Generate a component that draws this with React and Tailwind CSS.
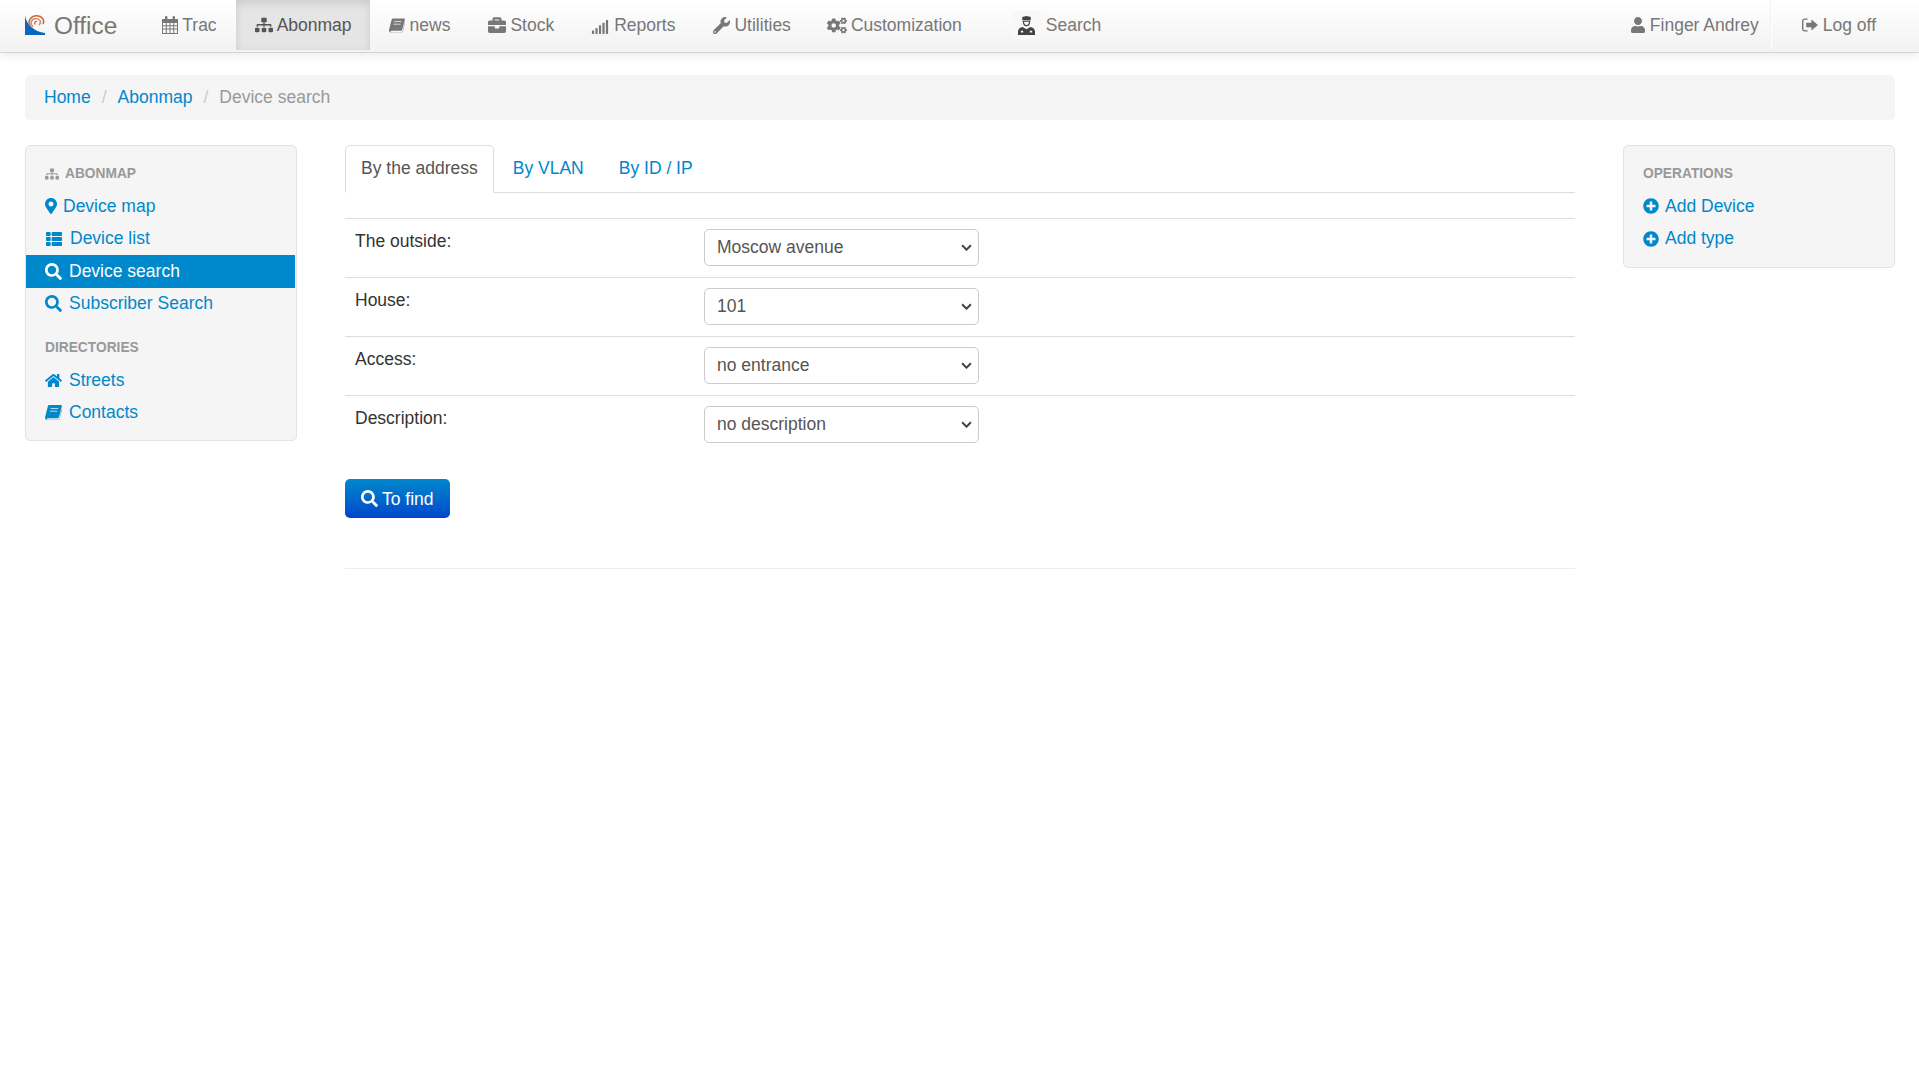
import React from 'react';
import {
  FaSitemap, FaBriefcase, FaSignal, FaWrench, FaCogs, FaUser, FaMapMarkerAlt, FaThList,
  FaSearch, FaHome, FaPlusCircle,
} from 'react-icons/fa';

const CalendarIcon = ({ className }) => (
  <svg viewBox="0 0 16 18" className={className} fill="currentColor">
    <rect x="3" y="0" width="2.4" height="4" rx="1" />
    <rect x="10.6" y="0" width="2.4" height="4" rx="1" />
    <path fillRule="evenodd" d="M0 3h16v15H0zM1 7v2.2h2.8V7zm3.8 0v2.2h2.7V7zm3.7 0v2.2h2.7V7zm3.7 0v2.2H15V7zM1 10.2v2.3h2.8v-2.3zm3.8 0v2.3h2.7v-2.3zm3.7 0v2.3h2.7v-2.3zm3.7 0v2.3H15v-2.3zM1 13.5V17h2.8v-3.5zm3.8 0V17h2.7v-3.5zm3.7 0V17h2.7v-3.5zm3.7 0V17H15v-3.5z" />
  </svg>
);

const BookIcon = ({ className }) => (
  <svg viewBox="0 0 18 16" className={className} fill="currentColor">
    <path fillRule="evenodd" d="M4.5 0H17c.8 0 1.100.6.9 1.300l-3 11.600c-.2.7-.8 1.100-1.500 1.100H2.600c-.7 0-1 .5-.8 1 .1.400.5.600 1 .600h11.400c.5 0 .9-.4 1-.8L18 3.500v1.700l-2.400 9.500c-.2.800-1 1.300-1.900 1.300H2.600C1.200 16 0 14.900 0 13.500c0-.4.100-.8.200-1.200L3 1.200C3.200.5 3.800 0 4.500 0zM6 3.300l-.2.8h8l.2-.8zM5.200 6l-.2.800h8l.2-.8z" />
  </svg>
);

const LogOffIcon = ({ className }) => (
  <svg viewBox="0 0 17 14" className={className} fill="currentColor">
    <path d="M6 0v1.500H3C2.200 1.500 1.500 2.200 1.500 3v8c0 .8.700 1.500 1.500 1.500h3V14H3c-1.700 0-3-1.300-3-3V3c0-1.700 1.300-3 3-3z" />
    <path d="M10 1.200 17 7l-7 5.800V9.300H4.500V4.700H10z" />
  </svg>
);

const PoliceIcon = ({ className }) => (
  <svg viewBox="0 0 18 20" className={className} fill="currentColor">
    <path d="M4.500 1 9 0l4.500 1v3.500h-9z" />
    <path d="M5.700 5.500h6.600c0 2.800-1.300 4.600-3.300 4.600s-3.300-1.800-3.300-4.600z" fill="none" stroke="currentColor" strokeWidth="1.300" />
    <path fillRule="evenodd" d="M5 11.500 9 14l4-2.500c3 .6 5 2.300 5 4.800V20H0v-3.700c0-2.500 2-4.200 5-4.800zM3 15.500v2h2.500v-2zm9.500 0v2H15v-2z" />
  </svg>
);

const Logo = () => (
  <svg viewBox="0 0 22 20" className="w-[22px] h-5 shrink-0">
    <path d="M0 1C2 10 9 16.500 20 18v2H0z" fill="#0a67bd" />
    <path d="M5 11C2 5 7 .5 12 .8c5 .2 8 4.200 6 8.200" fill="none" stroke="#c8643c" strokeWidth="1.500" />
    <path d="M8 12C4 8 7 3.500 11 3.500c4 0 6 3.500 3 6.500" fill="none" stroke="#d98a62" strokeWidth="1.500" />
    <path d="M10 9.500C9 7.500 10.500 6 12 6.500" fill="none" stroke="#c8643c" strokeWidth="1.300" />
  </svg>
);

const NavItem = ({ icon: Icon, iconClass, label, active, gap = 'gap-[4px]', pad = 'px-[19px]' }) => (
  <a className={`flex items-center ${gap} h-[50px] ${pad} ${active ? 'bg-[#e5e5e5] text-[#555] shadow-[inset_0_3px_8px_rgba(0,0,0,0.12)]' : ''}`}>
    <Icon className={iconClass} />
    <span>{label}</span>
  </a>
);

const SideItem = ({ icon: Icon, iconClass, label, active, gap = 'gap-[7px]' }) => (
  <a className={`flex items-center ${gap} h-[32.5px] pl-[19px] mr-px ${active ? 'bg-[#0088cc] text-white' : 'text-[#0088cc]'}`}>
    <Icon className={iconClass} />
    <span>{label}</span>
  </a>
);

const SideHeader = ({ children, className = '' }) => (
  <div className={`flex items-center gap-[6px] h-[25px] pl-[19px] text-[13.75px] font-bold uppercase text-[#999] ${className}`}>
    {children}
  </div>
);

const fields = [
  { label: 'The outside:', value: 'Moscow avenue' },
  { label: 'House:', value: '101' },
  { label: 'Access:', value: 'no entrance' },
  { label: 'Description:', value: 'no description' },
];

export default function App() {
  return (
    <div className="min-h-[1079px] bg-white font-['Liberation_Sans',Arial,sans-serif] text-[17.5px] leading-[25px] text-[#333]">
      <header className="flex items-start justify-between h-[53px] border-b border-[#d4d4d4] bg-linear-to-b from-white to-[#f2f2f2] shadow-[0_1px_10px_rgba(0,0,0,0.1)] text-[#777]">
        <nav className="flex items-start">
          <a className="flex items-center gap-[7px] h-[50px] pl-[25px] pr-[26px] text-[24.4px]">
            <Logo />
            <span>Office</span>
          </a>
          <NavItem icon={CalendarIcon} iconClass="w-4 h-[18px]" label="Trac" />
          <NavItem icon={FaSitemap} iconClass="w-[18px] h-[18px]" label="Abonmap" active pad="pl-[19px] pr-[18px]" />
          <NavItem icon={BookIcon} iconClass="w-4 h-[15px]" label="news" gap="gap-[5px]" />
          <NavItem icon={FaBriefcase} iconClass="w-[18px] h-[18px]" label="Stock" gap="gap-[4px]" />
          <NavItem icon={FaSignal} iconClass="w-[18px] h-[14px] mt-[3px]" label="Reports" gap="gap-[5px]" pad="pl-[18px] pr-[19px]" />
          <NavItem icon={FaWrench} iconClass="w-[17px] h-[17px]" label="Utilities" pad="pl-[19px] pr-[17px]" />
          <NavItem icon={FaCogs} iconClass="w-5 h-[17px]" label="Customization" />
          <a className="flex items-center gap-[5px] h-[50px] ml-[32px] pr-[19px]">
            <span className="flex items-center justify-center w-[28px] h-[28px] bg-[#f8f8f8]">
              <PoliceIcon className="w-[17px] h-[19px] text-[#444]" />
            </span>
            <span>Search</span>
          </a>
        </nav>
        <nav className="flex items-start">
          <NavItem icon={FaUser} iconClass="w-[14px] h-[16px]" label="Finger Andrey" gap="gap-[5px]" pad="pl-[19px] pr-[11px]" />
          <span className="w-[2px] h-[50px] border-l border-[#f2f2f2] bg-white" />
          <a className="flex items-center gap-[5px] h-[50px] pl-[30px] pr-[43px]">
            <LogOffIcon className="w-4 h-[14px]" />
            <span>Log off</span>
          </a>
        </nav>
      </header>

      <div className="pl-[25px] pr-[24px]">
        <div className="flex items-center h-[45px] mt-[22px] px-[19px] rounded-[5px] bg-[#f5f5f5] text-[#999]">
          <a className="text-[#0088cc]">Home</a>
          <span className="px-[11px] text-[#ccc]">/</span>
          <a className="text-[#0088cc]">Abonmap</a>
          <span className="px-[11px] text-[#ccc]">/</span>
          <span>Device search</span>
        </div>

        <div className="grid grid-cols-[272px_1fr_272px] gap-12 items-start mt-[25px]">
          <aside className="pt-[15px] pb-[11px] rounded-[5px] border border-[#e3e3e3] bg-[#f5f5f5]">
            <SideHeader className="mb-[4px]">
              <FaSitemap className="w-[14px] h-[14px]" />
              <span>Abonmap</span>
            </SideHeader>
            <SideItem icon={FaMapMarkerAlt} iconClass="w-[12px] h-[16px]" label="Device map" gap="gap-[6px]" />
            <SideItem icon={FaThList} iconClass="w-[18px] h-[16px]" label="Device list" />
            <SideItem icon={FaSearch} iconClass="w-[17px] h-[17px]" label="Device search" active />
            <SideItem icon={FaSearch} iconClass="w-[17px] h-[17px]" label="Subscriber Search" />
            <SideHeader className="mt-[15px] mb-[4px]">
              <span>Directories</span>
            </SideHeader>
            <SideItem icon={FaHome} iconClass="w-[17px] h-[15px]" label="Streets" />
            <SideItem icon={BookIcon} iconClass="w-[17px] h-[15px]" label="Contacts" />
          </aside>

          <main>
            <div className="flex h-[48px] border-b border-[#ddd]">
              <a className="h-[48px] px-[15px] pt-[10px] rounded-t-[5px] border border-[#ddd] border-b-white bg-white text-[#555]">By the address</a>
              <a className="h-[47px] ml-[2px] px-[17px] pt-[11px] text-[#0088cc]">By VLAN</a>
              <a className="h-[47px] ml-px px-[17px] pt-[11px] text-[#0088cc]">By ID / IP</a>
            </div>

            <div className="mt-[25px]">
              {fields.map(f => (
                <div key={f.label} className="grid grid-cols-[349px_1fr] h-[59px] border-t border-[#ddd] pl-[10px]">
                  <label className="pt-[5px] mt-[5px]">{f.label}</label>
                  <div className="pt-[10px]">
                    <div className="relative w-[275px]">
                      <select defaultValue={f.value} className="w-full h-[37px] pl-[12px] rounded-[5px] border border-[#ccc] bg-white text-[#555] appearance-none">
                        <option>{f.value}</option>
                      </select>
                      <svg viewBox="0 0 10 6" className="absolute right-[7px] top-[15px] w-[11px] h-[7px] pointer-events-none" fill="none" stroke="#444" strokeWidth="1.800">
                        <path d="M1 1l4 4 4-4" />
                      </svg>
                    </div>
                  </div>
                </div>
              ))}
            </div>

            <button className="flex items-center gap-[4px] h-[39px] w-[105px] mt-[25px] pl-[16px] rounded-[5px] bg-linear-to-b from-[#0088cc] to-[#0044cc] text-white">
              <FaSearch className="w-[17px] h-[17px]" />
              <span className="mt-px">To find</span>
            </button>

            <div className="mt-[50px] border-t border-[#eee]" />
          </main>

          <aside className="pt-[15px] pb-[12px] rounded-[5px] border border-[#e3e3e3] bg-[#f5f5f5]">
            <SideHeader className="mb-[4px]">Operations</SideHeader>
            <SideItem icon={FaPlusCircle} iconClass="w-4 h-4" label="Add Device" gap="gap-[6px]" />
            <SideItem icon={FaPlusCircle} iconClass="w-4 h-4" label="Add type" gap="gap-[6px]" />
          </aside>
        </div>
      </div>
    </div>
  );
}
